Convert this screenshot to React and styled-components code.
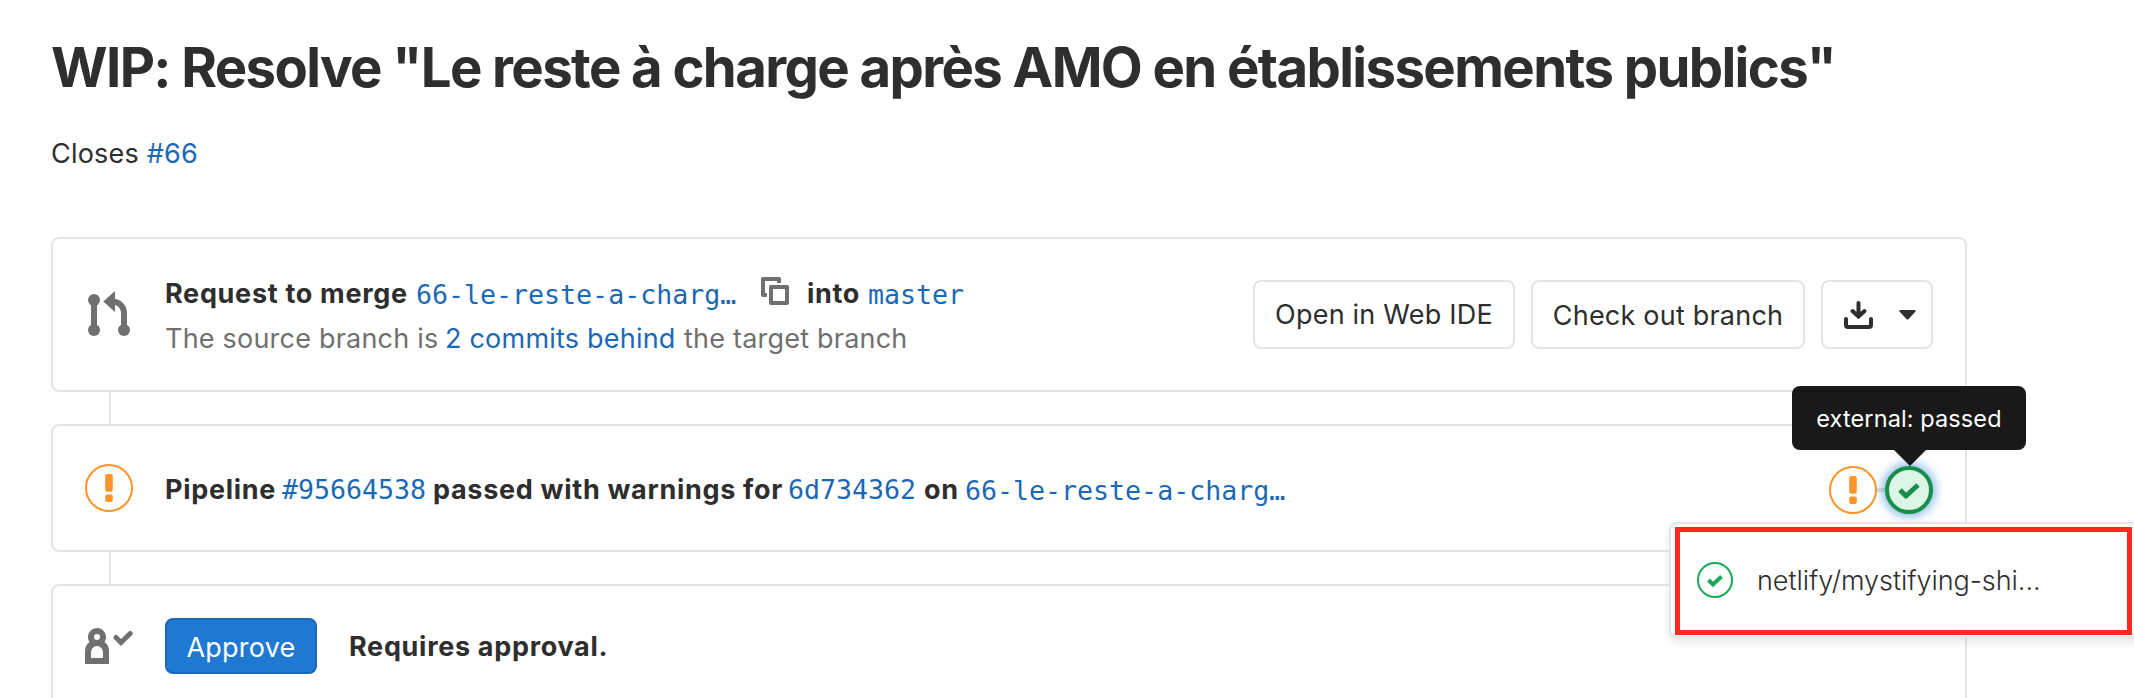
import React from "react";
import styled, { createGlobalStyle, css } from "styled-components";

const Global = createGlobalStyle`
  * { box-sizing: border-box; }
  html, body { margin: 0; background: #fff; }
  body { height: 698px; overflow: hidden; }
`;

const Page = styled.main`
  width: 2134px;
  height: 698px;
  padding: 31px 167px 0 51px;
  overflow: hidden;
  font: 400 27px/40px Inter, "Liberation Sans", sans-serif;
  letter-spacing: 0.21px;
  color: #2e2e2e;
  white-space: nowrap;
`;

const Text = styled.span`
  font-weight: ${(p) => p.$weight || 400};
  color: ${(p) => p.$color || "inherit"};
`;

const Strong = styled.strong`
  font-weight: 700;
  letter-spacing: 0.7px;
`;

const Title = styled.h1`
  margin: 0;
  height: 72px;
  font-size: 54.5px;
  line-height: 72px;
  font-weight: 700;
  letter-spacing: -1.61px;
`;

const Description = styled.p`
  margin: 31px 0 0;
  height: 40px;
`;

const Link = styled.a`
  color: #1b69b6;
  text-decoration: none;
`;

const Mono = styled(Link)`
  font: 400 26.6px/40px "DejaVu Sans Mono", "Liberation Mono", monospace;
  letter-spacing: 0;
  position: relative;
  top: ${(p) => p.$drop || 0}px;
`;

const Widget = styled.div`
  margin-top: 63px;
  display: flex;
  flex-direction: column;
`;

const Card = styled.section`
  display: flex;
  align-items: center;
  height: ${(p) => p.$height}px;
  padding: 0 32px;
  border: 2px solid #e5e5e5;
  border-radius: 8px;
  background: #fff;
`;

const Connector = styled.div`
  width: 2px;
  height: 32px;
  margin-left: 58px;
  background: #e5e5e5;
`;

const IconSlot = styled.div`
  display: flex;
  flex: none;
  width: 48px;
  height: 48px;
  margin-right: 32px;
  padding-bottom: ${(p) => p.$lift || 0}px;
  align-items: center;
  justify-content: center;
`;

const Body = styled.div`
  flex: 1;
  min-width: 0;
  padding-top: 3px;
`;

const Line = styled.div`
  display: flex;
  height: ${(p) => p.$height || 40}px;
  line-height: 40px;
  align-items: baseline;
`;

const Cell = styled.span`
  flex: none;
  width: ${(p) => p.$width}px;
`;

const CopyButton = styled(Cell)`
  display: flex;
  align-self: flex-start;
  padding: 3px 0 0 1px;
`;

const Actions = styled.div`
  display: flex;
  gap: 16px;
`;

const Button = styled.button`
  display: flex;
  align-items: center;
  justify-content: center;
  width: ${(p) => p.$width}px;
  height: ${(p) => p.$height || 69}px;
  padding: ${(p) => p.$nudge || 0}px 0 0;
  border: 2px solid #e5e5e5;
  border-radius: 8px;
  background: #fff;
  color: #2e2e2e;
  font: inherit;
  letter-spacing: inherit;
  ${(p) =>
    p.$primary &&
    css`
      background: #1f78d1;
      border-color: #1b69b6;
      color: #fff;
      margin-right: 32px;
    `}
`;

const Approval = styled(Strong)`
  padding-top: 2px;
`;

const Stages = styled.div`
  position: relative;
  display: flex;
  align-items: center;
  margin-top: 4px;
`;

const StageLink = styled.i`
  width: 8px;
  height: 4px;
  background: #dfdfdf;
`;

const Passed = styled.div`
  display: flex;
  align-items: center;
  justify-content: center;
  width: 48px;
  height: 48px;
  border: 4px solid #168f48;
  border-radius: 50%;
  background: #dcf5e7;
  box-shadow: 0 0 10px 3px rgba(31, 120, 209, 0.5);
`;

const Tooltip = styled.div`
  position: absolute;
  z-index: 3;
  left: -37px;
  top: -80px;
  width: 234px;
  height: 64px;
  border-radius: 8px;
  background: rgba(0, 0, 0, 0.9);
  color: #fff;
  font-size: 23.5px;
  line-height: 65px;
  text-align: center;
  letter-spacing: 0.1px;
  &::after {
    content: "";
    position: absolute;
    left: 102px;
    top: 64px;
    border: 16px solid transparent;
    border-bottom: 0;
    border-top-color: rgba(0, 0, 0, 0.9);
  }
`;

const Menu = styled.div`
  position: absolute;
  z-index: 2;
  left: -160px;
  top: 56px;
  width: 480px;
  height: 116px;
  padding: 3px 4px;
  border: 2px solid #e5e5e5;
  border-radius: 8px;
  background: #fff;
  box-shadow: 0 4px 8px rgba(0, 0, 0, 0.1);
`;

const MenuItem = styled.div`
  display: flex;
  align-items: center;
  width: 457px;
  height: 108px;
  padding: 0 0 3px 17px;
  border: 5px solid #ff2a1c;
  gap: 24px;
  letter-spacing: -0.05px;
`;

const MenuLabel = styled(Text)`
  padding-top: 3px;
`;

const Warning = () => (
  <svg width="48" height="48" viewBox="0 0 48 48">
    <circle cx="24" cy="24" r="23" fill="#fff" stroke="#fc9427" strokeWidth="2" />
    <rect x="20.200" y="10" width="7.600" height="17.700" rx="2" fill="#fc9427" />
    <rect x="20.200" y="30.500" width="7.600" height="7.500" rx="2" fill="#fc9427" />
  </svg>
);

const MergeIcon = () => (
  <svg width="42" height="45" viewBox="0 0 42 45" fill="#707070">
    <circle cx="6" cy="9" r="6" />
    <circle cx="6" cy="39" r="6" />
    <circle cx="36" cy="39" r="6" />
    <path d="M3 9h6v30H3zM15.2 10.5 27 0v7.7c7 1.5 12 7 12 14.3v17h-6V22c0-4-2.5-7-6-8v7z" />
  </svg>
);

const CopyIcon = () => (
  <svg width="28" height="28" viewBox="0 0 28 28" fill="none" stroke="#707070" strokeWidth="4" strokeLinejoin="round">
    <rect x="10" y="10" width="16" height="16" />
    <path d="M6 18H2V2h16v4" />
  </svg>
);

const DownloadIcon = () => (
  <svg width="29" height="28" viewBox="0 0 29 28" fill="none" stroke="#2e2e2e" strokeWidth="4" strokeLinecap="round">
    <path d="M2 18v6q0 2 2 2h21q2 0 2-2v-6" />
    <path d="M14.5 2v12M8.500 10l6 5.500 6-5.500" />
  </svg>
);

const Caret = () => (
  <svg width="17" height="10" viewBox="0 0 17 10" fill="#2e2e2e">
    <path d="M1 0h15q1.2.6.5 1.6L9.4 9.2q-.9.8-1.8 0L.5 1.6Q-.2.6 1 0z" />
  </svg>
);

const Split = styled.span`
  display: flex;
  align-items: center;
  gap: 26px;
  padding-left: 6px;
`;

const ApproveIcon = () => (
  <svg width="48" height="36" viewBox="0 0 48 36">
    <path
      fill="#707070"
      fillRule="evenodd"
      d="M12 0c5 0 9 4 9 9 0 2-.5 3.700-1.500 5C22.500 16 24 19 24 23v13H0V23c0-4 1.500-7 4.500-9C3.500 12.700 3 11 3 9c0-5 4-9 9-9zm0 6a3 3 0 1 0 0 6 3 3 0 0 0 0-6zm0 12c-3.500 0-6 3-6 7v5h12v-5c0-4-2.500-7-6-7z"
    />
    <path d="M31 9.500l5 5 9.200-9" fill="none" stroke="#707070" strokeWidth="5" strokeLinecap="round" />
  </svg>
);

const PassedIcon = () => (
  <svg width="36" height="36" viewBox="0 0 36 36" fill="none" stroke="#1aaa55">
    <circle cx="18" cy="18" r="17" strokeWidth="2" />
    <path d="M11.500 18l4.500 4.500 8.500-8" strokeWidth="4" />
  </svg>
);

export default function App() {
  return (
    <Page>
      <Global />
      <Title>WIP: Resolve "Le reste à charge après AMO en établissements publics"</Title>
      <Description>
        Closes <Link href="#66">#66</Link>
      </Description>
      <Widget>
        <Card $height={155}>
          <IconSlot $lift={2}>
            <MergeIcon />
          </IconSlot>
          <Body>
            <Line $height={45}>
              <Cell $width={251}><Strong>Request to merge</Strong></Cell>
              <Cell $width={344}><Mono $drop={1}>66-le-reste-a-charg…</Mono></Cell>
              <CopyButton $width={47}><CopyIcon /></CopyButton>
              <Cell $width={61}><Strong>into</Strong></Cell>
              <Mono $drop={1}>master</Mono>
            </Line>
            <Line>
              <Cell $width={280}><Text $color="#707070">The source branch is</Text></Cell>
              <Cell $width={239}><Link>2 commits behind</Link></Cell>
              <Text $color="#707070">the target branch</Text>
            </Line>
          </Body>
          <Actions>
            <Button $width={262}>Open in Web IDE</Button>
            <Button $width={274} $nudge={2}>Check out branch</Button>
            <Button $width={112}>
              <Split>
                <DownloadIcon />
                <Caret />
              </Split>
            </Button>
          </Actions>
        </Card>
        <Connector />
        <Card $height={128}>
          <IconSlot>
            <Warning />
          </IconSlot>
          <Body>
            <Line>
              <Cell $width={117}><Strong>Pipeline</Strong></Cell>
              <Cell $width={151}><Mono>#95664538</Mono></Cell>
              <Cell $width={355}><Strong>passed with warnings for</Strong></Cell>
              <Cell $width={136}><Mono>6d734362</Mono></Cell>
              <Cell $width={41}><Strong>on</Strong></Cell>
              <Mono $drop={1}>66-le-reste-a-charg…</Mono>
            </Line>
          </Body>
          <Stages>
            <Warning />
            <StageLink />
            <Passed>
              <svg width="22" height="17" viewBox="0 0 22 17" fill="none" stroke="#168f48" strokeWidth="5" strokeLinejoin="round">
                <path d="M2 8l6 6L20 3" />
              </svg>
            </Passed>
            <Tooltip>external: passed</Tooltip>
            <Menu>
              <MenuItem>
                <PassedIcon />
                <MenuLabel $weight={300}>netlify/mystifying-shi...</MenuLabel>
              </MenuItem>
            </Menu>
          </Stages>
        </Card>
        <Connector />
        <Card $height={124}>
          <IconSlot>
            <ApproveIcon />
          </IconSlot>
          <Button $primary $width={152} $height={56} $nudge={3}>Approve</Button>
          <Approval>Requires approval.</Approval>
        </Card>
      </Widget>
    </Page>
  );
}
